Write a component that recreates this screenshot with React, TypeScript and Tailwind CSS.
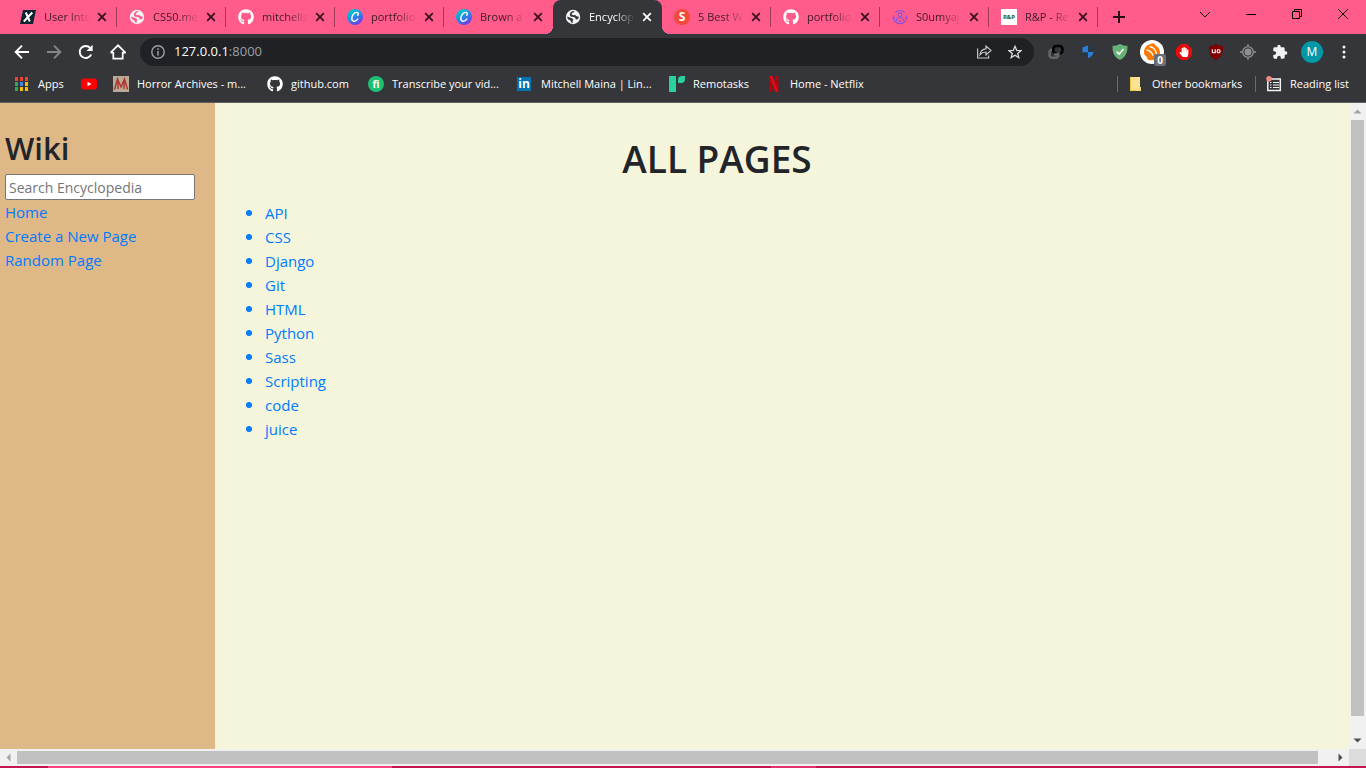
import type { ReactNode } from 'react';
import { FaGithub, FaHandPaper } from 'react-icons/fa';
import { MdExtension } from 'react-icons/md';

const Globe = ({ hole }: { hole: string }) => (
  <svg width="16" height="16" viewBox="0 0 16 16">
    <circle cx="8" cy="8" r="7.2" fill="#f4f4f4" />
    <path
      d="M7 2.2 9.6 1.9 8.9 3.3 7.4 3.8 6.5 5.3 8 6.3 10.2 6.1 11.7 7.3 13.9 7.8 13.3 9.8 11.8 10.6 10.6 10.2 10.3 8.7 8.4 7.9 5.6 7.6 4.8 6.3 5.2 4.1Z"
      fill={hole}
    />
    <path d="M1.9 7.6 4.8 8.6 7.4 9.4 8.4 10.8 7.5 12.2 8 13.9 6.3 13.6 5.4 11.6 3 10.2Z" fill={hole} />
  </svg>
);

const Canva = () => (
  <svg width="16" height="16" viewBox="0 0 16 16">
    <defs>
      <linearGradient id="canva" x1="0.2" y1="0" x2="0.8" y2="1">
        <stop offset="0.1" stopColor="#00c4cc" />
        <stop offset="0.55" stopColor="#2f80e8" />
        <stop offset="1" stopColor="#7d2ae8" />
      </linearGradient>
    </defs>
    <circle cx="8" cy="8" r="8" fill="url(#canva)" />
    <path
      d="M10.8 6.3c1-1.200.6-2.900-1-2.900C7 3.400 4.800 6.600 4.800 9.300c0 3.900 3.700 3.700 6 .8"
      fill="none"
      stroke="#fff"
      strokeWidth="1.4"
      strokeLinecap="round"
    />
  </svg>
);

const XMark = () => (
  <svg width="16" height="16" viewBox="0 0 16 16">
    <path d="M3 1h13l-3 14H0Z" fill="#0d2530" />
    <path d="M5.800 3.500 9.800 12.500M12.300 3.500 3.800 12.500" stroke="#fff" strokeWidth="2" />
  </svg>
);

const Letter = ({ className, children }: { className: string; children: ReactNode }) => (
  <span className={`flex size-4 items-center justify-center leading-none font-bold ${className}`}>{children}</span>
);

const Person = () => (
  <svg width="16" height="16" viewBox="0 0 16 16" fill="none" stroke="#8a4fe0" strokeWidth="1.1">
    <path d="M3.200 3.600A6.600 6.600 0 0 1 12.800 3.600M14.400 6.500A6.600 6.600 0 0 1 8 14.600 6.600 6.600 0 0 1 1.600 6.500" />
    <circle cx="8" cy="5.800" r="1.900" />
    <path d="M4.500 12V11a2 2 0 0 1 2-2h3a2 2 0 0 1 2 2v1M6 12h4M0 9h3M13 9h3" />
  </svg>
);

const Cross = ({ color }: { color: string }) => (
  <svg width="10" height="10" viewBox="0 0 10 10">
    <path d="M1.200 1.200 8.800 8.800M8.800 1.200 1.200 8.800" stroke={color} strokeWidth="1.800" />
  </svg>
);

const tabs: { title: string; icon: ReactNode; active?: boolean; line?: boolean }[] = [
  { title: 'User Inte', icon: <XMark />, line: true },
  { title: 'CS50.me', icon: <Globe hole="#ff5b8b" />, line: true },
  { title: 'mitchells', icon: <FaGithub className="size-4 text-white" />, line: true },
  { title: 'portfolio', icon: <Canva />, line: true },
  { title: 'Brown a', icon: <Canva /> },
  { title: 'Encyclop', icon: <Globe hole="#35363a" />, active: true },
  {
    title: '5 Best W',
    icon: <Letter className="rounded-full bg-[#f4483a] text-xs text-white">S</Letter>,
    line: true,
  },
  { title: 'portfolio', icon: <FaGithub className="size-4 text-white" />, line: true },
  { title: 'S0umyaj', icon: <Person />, line: true },
  {
    title: 'R&P - Re',
    icon: <Letter className="bg-white text-[6px] text-[#245c2c]">R&amp;P</Letter>,
    line: true,
  },
];

function TabStrip() {
  return (
    <header className="flex h-[34px] bg-[#ff5b8b] pl-2 text-[#3c1c28]">
      <div className="flex" role="tablist">
        {tabs.map((t, i) => (
          <div
            key={i}
            className={`relative flex w-[109px] items-center pr-2.5 pl-3 ${t.active ? 'rounded-t-lg bg-[#35363a] text-white' : ''}`}
          >
            {t.active && (
              <>
                <span className="absolute bottom-0 -left-2 size-2 bg-[radial-gradient(circle_at_0_0,#ff5b8b_8px,#35363a_8px)]" />
                <span className="absolute -right-2 bottom-0 size-2 bg-[radial-gradient(circle_at_100%_0,#ff5b8b_8px,#35363a_8px)]" />
              </>
            )}
            <button role="tab" aria-selected={!!t.active} className="flex items-center gap-2">
              {t.icon}
              <span className="w-[46px] text-left whitespace-nowrap [mask-image:linear-gradient(to_right,black_55%,transparent)]">
                {t.title}
              </span>
            </button>
            <button aria-label={`Close ${t.title}`} className="ml-auto">
              <Cross color={t.active ? '#fff' : '#36121f'} />
            </button>
            {t.line && <span className="absolute top-[7px] right-0 h-5 w-px bg-[#9c3a56]" />}
          </div>
        ))}
      </div>
      <button aria-label="New tab" className="ml-[15px]">
        <svg width="12" height="12" viewBox="0 0 12 12">
          <path d="M6 0v12M0 6h12" stroke="#2a0f18" strokeWidth="2" />
        </svg>
      </button>
      <div className="mr-[18px] ml-auto flex items-center gap-9 pb-[6px] text-black">
        <button aria-label="Search tabs">
          <svg width="10" height="10" viewBox="0 0 10 10" fill="none" stroke="currentColor">
            <path d="m0 3 5 5 5-5" />
          </svg>
        </button>
        <button aria-label="Minimize">
          <svg width="10" height="10" viewBox="0 0 10 10" stroke="currentColor">
            <path d="M0 5.500h10" />
          </svg>
        </button>
        <button aria-label="Restore">
          <svg width="10" height="10" viewBox="0 0 10 10" fill="none" stroke="currentColor">
            <path d="M.5 2.500h7v7h-7ZM2.500 2.500v-2h7v7h-2" />
          </svg>
        </button>
        <button aria-label="Close window">
          <svg width="10" height="10" viewBox="0 0 10 10" stroke="currentColor">
            <path d="m0 0 10 10M10 0 0 10" />
          </svg>
        </button>
      </div>
    </header>
  );
}

const extensions: { name: string; icon: ReactNode }[] = [
  {
    name: 'Links',
    icon: (
      <svg width="16" height="16" viewBox="0 0 16 16" fill="none" strokeWidth="2.600">
        <path d="M10.500 8v2.700a3 3 0 0 1-3 3H4.500a3 3 0 0 1-3-3V8.500a3 3 0 0 1 3-3H6" stroke="#65676b" />
        <rect x="5.300" y="2" width="9.200" height="7.500" rx="3" stroke="#050505" />
        <path d="M6 10.500h2.500a2 2 0 0 0 2-2" stroke="#65676b" />
      </svg>
    ),
  },
  {
    name: 'Blue shield',
    icon: (
      <svg width="16" height="16" viewBox="0 0 16 16">
        <path d="M8 1.500 2.500 3.500v5H8Z" fill="#2c7fd8" />
        <path d="M8 1.500 13.500 3.500v5H8Z" fill="#26384a" />
        <path d="M8 8h5.500c-.5 3-2.500 5-5.500 6.300Z" fill="#2c7fd8" />
        <path d="M8 8.500H2.500c.5 3 2.500 4.500 5.500 5.800Z" fill="#26384a" />
      </svg>
    ),
  },
  {
    name: 'Green shield',
    icon: (
      <svg width="16" height="16" viewBox="0 0 16 16">
        <path d="M8 0c2.500 1.300 5 1.800 7.500 1.800C15.500 8.500 14 13 8 16 2 13 .5 8.500.5 1.800 3 1.800 5.500 1.300 8 0Z" fill="#67b279" />
        <path d="m4.700 7.600 2.500 2.500 4.300-5" fill="none" stroke="#fff" strokeWidth="1.500" />
      </svg>
    ),
  },
  {
    name: 'Avast',
    icon: (
      <span className="relative -mx-1 block">
        <svg width="24" height="24" viewBox="0 0 24 24">
          <circle cx="12" cy="12" r="12" fill="#fff" />
          <path d="M4 12c0-4 3.500-8 7-8 2-1.500 4-.5 4.500 1.500C19 7.500 20 10 20 13c-1 5-4 7-8 7-3 1-5-.5-5-3-2-1-3-3-3-5Z" fill="#ff7800" />
          <path d="M9.500 6.500c3.500.5 6.500 3.500 7 7.500M6.500 10c3 .5 5.500 2.500 6.500 5.500" stroke="#fff" strokeWidth="1.300" fill="none" />
        </svg>
        <span className="absolute top-[14px] left-[14px] flex size-3 items-center justify-center rounded-xs bg-[#6b7078] text-[10px] leading-none font-bold text-white">
          0
        </span>
      </span>
    ),
  },
  {
    name: 'AdBlock',
    icon: (
      <span className="flex size-4 items-center justify-center bg-[#e40d0d] [clip-path:polygon(30%_0,70%_0,100%_30%,100%_70%,70%_100%,30%_100%,0_70%,0_30%)]">
        <FaHandPaper className="size-[10px] text-white" />
      </span>
    ),
  },
  {
    name: 'uBlock Origin',
    icon: (
      <svg width="16" height="16" viewBox="0 0 16 16">
        <path d="M8 0c2 1.500 4 2 7 2 0 7-1 11-7 14C2 13 1 9 1 2c3 0 5-.5 7-2Z" fill="#800000" />
        <path d="M4.300 5.300v2.500a1 1 0 0 0 1 1h1.900V5.300" fill="none" stroke="#fff" strokeWidth="1.100" />
        <rect x="9.200" y="5.800" width="2.800" height="3" rx="1" fill="none" stroke="#fff" strokeWidth="1.100" />
      </svg>
    ),
  },
  {
    name: 'Target',
    icon: (
      <svg width="16" height="16" viewBox="0 0 16 16" fill="none" stroke="#8f9194" strokeWidth="1.300">
        <circle cx="8" cy="8" r="5.300" />
        <circle cx="8" cy="8" r="2.800" fill="#8f9194" />
        <path d="M8 0v3M8 13v3M0 8h3M13 8h3" />
      </svg>
    ),
  },
  { name: 'Extensions', icon: <MdExtension className="size-4 text-[#f1f3f4]" /> },
];

function Toolbar() {
  return (
    <div className="flex h-9 items-center bg-[#35363a] text-white">
      <nav className="flex items-center gap-4 pl-3.5" aria-label="Navigation">
        <button aria-label="Back">
          <svg width="16" height="16" viewBox="0 0 16 16" fill="none" stroke="#fff" strokeWidth="1.900">
            <path d="M15 8H2M8 1.700 1.700 8 8 14.300" />
          </svg>
        </button>
        <button aria-label="Forward">
          <svg width="16" height="16" viewBox="0 0 16 16" fill="none" stroke="#84868a" strokeWidth="1.900">
            <path d="M1 8h13M8 1.700 14.300 8 8 14.300" />
          </svg>
        </button>
        <button aria-label="Reload">
          <svg width="16" height="16" viewBox="0 0 16 16">
            <path d="M13.200 10.500A6 6 0 1 1 12.300 4" fill="none" stroke="#fff" strokeWidth="1.900" />
            <path d="M14.600.8V7H8.500Z" fill="#fff" />
          </svg>
        </button>
        <button aria-label="Home">
          <svg width="16" height="16" viewBox="0 0 16 16" fill="none" stroke="#fff" strokeWidth="1.700">
            <path d="M3.300 8v6.700h9.400V8M.6 8.600 8 1.300l7.400 7.300H12.700M.6 8.600H3.300" />
          </svg>
        </button>
      </nav>
      <div className="ml-3.5 flex h-7 flex-1 items-center rounded-full bg-[#202124] pr-3 pl-[11px]">
        <svg width="14" height="14" viewBox="0 0 14 14" className="shrink-0">
          <circle cx="7" cy="7" r="6.200" fill="none" stroke="#9aa0a6" strokeWidth="1.400" />
          <path d="M7 6v4.500M7 3.300v1.600" stroke="#9aa0a6" strokeWidth="1.500" />
        </svg>
        <a href="http://127.0.0.1:8000" className="ml-[9px] flex-1 text-[13px]">
          127.0.0.1<span className="text-[#9aa0a6]">:8000</span>
        </a>
        <div className="flex items-center gap-4">
          <button aria-label="Share">
            <svg width="16" height="16" viewBox="0 0 16 16" fill="none" stroke="#c4c7ca" strokeWidth="1.200">
              <path d="M1.600 4.500v9.500h11V11.500" />
              <path d="M4 10.500C4.500 7 7 5 10 4.800V2l5 4.500-5 4.500V8C7.500 8 5.500 8.800 4 10.500Z" />
            </svg>
          </button>
          <button aria-label="Bookmark">
            <svg width="14" height="14" viewBox="0 0 14 14" fill="none" stroke="#d5d7d9" strokeWidth="1.300">
              <path d="m7 1.300 1.700 4 4.400.3-3.400 2.800 1.100 4.200L7 10.300l-3.800 2.300 1.100-4.200L.9 5.600l4.400-.3Z" />
            </svg>
          </button>
        </div>
      </div>
      <div className="ml-3.5 flex items-center gap-4">
        {extensions.map((e) => (
          <button key={e.name} aria-label={e.name}>
            {e.icon}
          </button>
        ))}
      </div>
      <button className="ml-[13px] flex size-[22px] items-center justify-center rounded-full bg-[#0097a7] text-xs">M</button>
      <button aria-label="Menu" className="mr-3.5 ml-[13px]">
        <svg width="16" height="16" viewBox="0 0 16 16" fill="#f1f3f4">
          <circle cx="8" cy="3" r="1.500" />
          <circle cx="8" cy="8" r="1.500" />
          <circle cx="8" cy="13" r="1.500" />
        </svg>
      </button>
    </div>
  );
}

const appColors = ['#ea4335', '#ea4335', '#ea4335', '#34a853', '#4285f4', '#fbbc04', '#34a853', '#fbbc04', '#fbbc04'];

function Bookmark({ icon, label, className = '' }: { icon: ReactNode; label: string; className?: string }) {
  return (
    <a href="#" className={`flex shrink-0 items-center gap-2 whitespace-nowrap ${className}`}>
      {icon}
      {label}
    </a>
  );
}

function BookmarksBar() {
  return (
    <nav
      aria-label="Bookmarks"
      className="flex h-[33px] items-center border-b border-[#5f6063] bg-[#35363a] pb-1 pl-3.5 text-white"
    >
      <Bookmark
        className="w-[67px]"
        label="Apps"
        icon={
          <svg width="16" height="16" viewBox="0 0 16 16" className="shrink-0">
            {appColors.map((c, i) => (
              <rect key={i} x={1 + (i % 3) * 5} y={1 + Math.floor(i / 3) * 5} width="3" height="4" fill={c} />
            ))}
          </svg>
        }
      />
      <a href="#" aria-label="YouTube" className="w-8">
        <svg width="16" height="16" viewBox="0 0 16 16">
          <rect y="2.500" width="16" height="11" rx="3" fill="#f00" />
          <path d="m6.500 5.800 4 2.200-4 2.200Z" fill="#fff" />
        </svg>
      </a>
      <Bookmark
        className="w-[154px]"
        label="Horror Archives - m..."
        icon={
          <svg width="16" height="16" viewBox="0 0 16 16" className="shrink-0">
            <rect width="16" height="16" fill="#b9ab98" />
            <path d="M1.500 13.500 4.500 3l3.500 8 3.500-8 3 10.500M5 5v8M11 5v8" fill="none" stroke="#b1382f" strokeWidth="1.500" />
          </svg>
        }
      />
      <Bookmark
        className="w-[101px]"
        label="github.com"
        icon={<FaGithub className="size-4 shrink-0" />}
      />
      <Bookmark
        className="w-[149px]"
        label="Transcribe your vid..."
        icon={<Letter className="shrink-0 rounded-full bg-[#1dbf73] text-[10px]">fi</Letter>}
      />
      <Bookmark
        className="w-[152px]"
        label="Mitchell Maina | Lin..."
        icon={
          <span className="w-4 shrink-0">
            <Letter className="size-3.5! bg-[#0073b1] text-xs">in</Letter>
          </span>
        }
      />
      <Bookmark
        className="w-[97px]"
        label="Remotasks"
        icon={
          <svg width="16" height="16" viewBox="0 0 16 16" className="shrink-0">
            <path d="M0 0h7v16H0ZM9 7V4q0-4 4-4h3v3q0 4-4 4Z" fill="#2bd0a0" />
          </svg>
        }
      />
      <Bookmark
        label="Home - Netflix"
        icon={
          <svg width="16" height="16" viewBox="0 0 16 16" className="shrink-0">
            <path d="M3.500 0h3v16l-3-.300ZM9.500 0h3v16l-3-.300Z" fill="#b1060f" />
            <path d="M3.500 0h3l6 16-3-.300Z" fill="#e50914" />
          </svg>
        }
      />
      <div className="ml-auto flex items-center gap-[10px] pr-3.5">
        <span className="h-4 w-px bg-[#6a6b6e]" />
        <Bookmark
          className="w-[117px]"
          label="Other bookmarks"
          icon={
            <svg width="16" height="16" viewBox="0 0 16 16" className="shrink-0">
              <path d="M2 1h10v10h1v4H2Z" fill="#fde293" />
              <path d="M2.500 1.500v13h6M12 11.500v3h-2" fill="none" stroke="#f3c93b" />
            </svg>
          }
        />
        <span className="h-4 w-px bg-[#6a6b6e]" />
        <Bookmark
          className="w-[86px]"
          label="Reading list"
          icon={
            <svg width="16" height="16" viewBox="0 0 16 16" className="shrink-0">
              <rect x="1.800" y="3" width="12.500" height="11.500" fill="none" stroke="#f1f3f4" strokeWidth="1.500" />
              <path d="M4 6.500h1.500M7 6.500h6M4 9h1.500M7 9h6M4 11.500h1.500M7 11.500h6" stroke="#f1f3f4" strokeWidth="1.200" />
              <circle cx="3" cy="2.800" r="2.800" fill="#f28b82" />
            </svg>
          }
        />
      </div>
    </nav>
  );
}

const entries = ['API', 'CSS', 'Django', 'Git', 'HTML', 'Python', 'Sass', 'Scripting', 'code', 'juice'];

function Arrow({ d, color }: { d: string; color: string }) {
  return (
    <svg width="17" height="17" viewBox="0 0 17 17" className="shrink-0">
      <path d={d} fill={color} />
    </svg>
  );
}

function WikiPage() {
  return (
    <div className="flex min-h-0 flex-1">
      <aside className="w-[215px] shrink-0 bg-[#deb887] px-[5px] pt-[26px] text-[15px] leading-6 text-[#007bff]">
        <h2 className="mb-[7px] text-[31px] leading-[38px] font-semibold text-[#212529]">Wiki</h2>
        <input
          type="text"
          aria-label="Search Encyclopedia"
          placeholder="Search Encyclopedia"
          className="block h-[26px] w-[190px] rounded-xs border border-[#767676] bg-white px-[3px] text-sm placeholder:text-[#757575]"
        />
        <a href="#" className="block">Home</a>
        <a href="#" className="block">Create a New Page</a>
        <a href="#" className="block">Random Page</a>
      </aside>
      <main className="flex-1 bg-[#f5f5dc] px-[10px] pt-8 text-[15px] leading-6 text-[#007bff]">
        <h1 className="mb-[18px] pr-[130px] text-center text-[37px] leading-[48px] font-semibold text-[#212529]">ALL PAGES</h1>
        <ul className="list-disc pl-10">
          {entries.map((e) => (
            <li key={e} className="marker:text-lg marker:leading-none">
              <a href="#">{e}</a>
            </li>
          ))}
        </ul>
      </main>
      <div className="flex w-[17px] shrink-0 flex-col bg-[#f1f1f1]">
        <Arrow d="M4.500 10.500h8l-4-4Z" color="#a3a3a3" />
        <div className="mx-0.5 mb-4 flex-1 bg-[#c1c1c1]" />
        <Arrow d="M4.500 6.500h8l-4 4Z" color="#505050" />
      </div>
    </div>
  );
}

export default function App() {
  return (
    <div className="flex h-screen flex-col overflow-hidden font-['Open_Sans','Noto_Sans',sans-serif] text-[11px]">
      <TabStrip />
      <Toolbar />
      <BookmarksBar />
      <WikiPage />
      <div className="flex h-[17px] shrink-0 bg-[#f1f1f1]">
        <Arrow d="M10.500 4.500v8l-4-4Z" color="#a3a3a3" />
        <div className="my-0.5 mr-[14px] flex-1 bg-[#c1c1c1]" />
        <Arrow d="M6.500 4.500v8l4-4Z" color="#505050" />
        <div className="w-[17px] bg-[#dcdcdc]" />
      </div>
      <div className="flex h-0.5 shrink-0 bg-[#c2184f]">
        <div className="ml-12 w-[344px] bg-[#f8437c]" />
        <div className="ml-[379px] w-[45px] bg-[#e0366b]" />
      </div>
    </div>
  );
}
